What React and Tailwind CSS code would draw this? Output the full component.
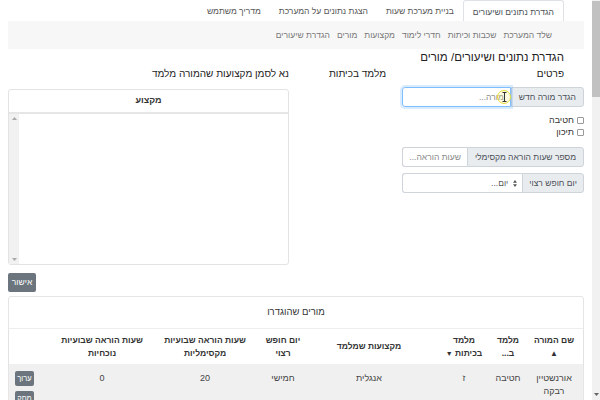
import React from 'react'

const tabs = ['הגדרת נתונים ושיעורים', 'בניית מערכת שעות', 'הצגת נתונים על המערכת', 'מדריך משתמש']
const subLinks = ['שלד המערכת', 'שכבות וכיתות', 'חדרי לימוד', 'מקצועות', 'מורים', 'הגדרת שיעורים']

const Arrows = () => (
  <svg width="4" height="7" viewBox="0 0 4 7" className="shrink-0">
    <path d="M2 0 L4 2.8 L0 2.8 Z" fill="#555" />
    <path d="M2 7 L4 4.2 L0 4.2 Z" fill="#555" />
  </svg>
)

const Check = ({ label }) => (
  <label className="flex items-center gap-[3px] h-[12px] leading-[12px] text-[9px] text-[#333]">
    <span className="w-[7px] h-[7px] border border-[#999] rounded-[1px] bg-white" />
    {label}
  </label>
)

const cols = 'grid grid-cols-[58px_34px_54px_136px_36px_120px_86px_1fr]'

const App = () => {
  return (
    <div className="flex w-[600px] h-[400px] overflow-hidden bg-white" style={{ fontFamily: '"Liberation Sans", "DejaVu Sans", sans-serif' }}>
      {/* תוכן העמוד */}
      <div dir="rtl" className="w-[592px] px-2 text-[#212529]">
        {/* לשוניות */}
        <div className="flex h-[21px] pr-[20px]">
          {tabs.map((t, i) => (
            <div
              key={t}
              className={
                i === 0
                  ? 'px-[9px] h-[21px] leading-[22px] text-[8.5px] text-[#495057] bg-white border border-b-0 border-[#dee2e6] rounded-t-[3px] whitespace-nowrap'
                  : 'px-[9px] h-[21px] leading-[22px] text-[8.5px] text-[#555] whitespace-nowrap'
              }
            >
              {t}
            </div>
          ))}
        </div>

        {/* תפריט משני */}
        <div className="h-[28px] bg-[#f7f7f7] flex items-center gap-[7px] pr-[32px] text-[8.5px] text-[#777]">
          {subLinks.map((l) => (
            <span key={l}>{l}</span>
          ))}
        </div>

        <h1 className="pr-[20px] text-[11.5px] leading-[17px] text-[#222] mt-0">הגדרת נתונים ושיעורים/ מורים</h1>

        <div className="grid grid-cols-[182px_1fr_281px]">
          <div className="pr-[20px] text-[10px] leading-[16px] text-[#222]">פרטים</div>
          <div className="pr-[16px] text-[10px] leading-[16px] text-[#222]">מלמד בכיתות</div>
          <div className="text-[10px] leading-[16px] text-[#222]">נא לסמן מקצועות שהמורה מלמד</div>

          {/* טופס פרטים */}
          <div className="pt-[5px] flex flex-col">
            <div className="flex h-[20px] text-[8.5px]">
              <span className="px-[7px] flex items-center bg-[#e9ecef] border border-[#ced4da] rounded-r-[3px] text-[#495057] whitespace-nowrap">הגדר מורה חדש</span>
              <div className="relative flex-1 flex items-center px-[6px] border border-[#80bdff] rounded-l-[3px] shadow-[0_0_0_2px_rgba(0,123,255,0.15)] text-[#888] whitespace-nowrap">
                מורה...
                <span className="absolute top-[2px] left-[94px] w-[14px] h-[14px] rounded-full border-[1.5px] border-[#e8dc3c] bg-[#f6ef8a]/25" />
                <svg width="5" height="10" viewBox="0 0 5 10" className="absolute top-[4px] left-[98.5px]">
                  <path d="M0.5 0.5 H4.5 M2.5 0.5 V9.5 M0.5 9.5 H4.5" stroke="#333" strokeWidth="1" fill="none" />
                </svg>
              </div>
            </div>
            <div className="mt-[7px] flex flex-col">
              <Check label="חטיבה" />
              <Check label="תיכון" />
            </div>
            <div className="flex h-[20px] text-[8.5px] mt-[9px]">
              <span className="px-[7px] flex items-center bg-[#e9ecef] border border-[#ced4da] rounded-r-[3px] text-[#495057] whitespace-nowrap">מספר שעות הוראה מקסימלי</span>
              <div className="flex-1 flex items-center px-[6px] border border-r-0 border-[#ced4da] rounded-l-[3px] bg-white text-[#888] whitespace-nowrap overflow-hidden">שעות הוראה...</div>
            </div>
            <div className="flex h-[20px] text-[8.5px] mt-[6px]">
              <span className="px-[6px] flex items-center bg-[#e9ecef] border border-[#ced4da] rounded-r-[3px] text-[#495057] whitespace-nowrap">יום חופש רצוי</span>
              <div className="flex-1 flex items-center gap-[5px] px-[5px] border border-r-0 border-[#ced4da] rounded-l-[3px] bg-white text-[#555]">
                <Arrows />
                יום...
              </div>
            </div>
          </div>

          <div />

          {/* טבלת מקצועות */}
          <div className="pt-[7px]">
            <div className="h-[176px] border border-[#e3e3e3] rounded-[3px] flex flex-col bg-white">
              <div className="h-[24px] flex items-center justify-center text-[9px] font-bold text-[#333] border-b-2 border-[#e6e6e6]">מקצוע</div>
              <div className="flex-1 flex">
                <div className="flex-1" />
                <div className="w-[10px] bg-[#f1f1f1] flex flex-col items-center justify-between py-[3px]">
                  <svg width="5" height="3" viewBox="0 0 5 3"><path d="M2.5 0 L5 3 L0 3 Z" fill="#aaa" /></svg>
                  <svg width="5" height="3" viewBox="0 0 5 3"><path d="M2.5 3 L5 0 L0 0 Z" fill="#aaa" /></svg>
                </div>
              </div>
            </div>
          </div>
        </div>

        <div className="flex justify-end mt-[8px]">
          <button className="h-[19px] w-[28px] bg-[#6c757d] text-white text-[8.5px] rounded-[2px]">אישור</button>
        </div>

        {/* מורים שהוגדרו */}
        <div className="mt-[4px] border border-[#e5e5e5] rounded-[3px] bg-white">
          <div className="h-[31px] flex items-center justify-center text-[9.5px] text-[#333]">מורים שהוגדרו</div>
          <div className={`${cols} border-t border-[#eee] h-[36px] items-center text-center text-[8.5px] leading-[13px] font-bold text-[#333] shadow-[0_2px_2px_rgba(0,0,0,0.04)] whitespace-nowrap`}>
            <div>שם המורה<br /><span className="text-[8px]">▲</span></div>
            <div>מלמד<br />ב...</div>
            <div>מלמד<br />בכיתות <span className="text-[7px]">▼</span></div>
            <div>מקצועות שמלמד</div>
            <div>יום חופש<br />רצוי</div>
            <div>שעות הוראה שבועיות<br />מקסימליות</div>
            <div>שעות הוראה שבועיות<br />נוכחיות</div>
            <div />
          </div>
          <div className={`${cols} bg-[#f0f0f0] h-[40px] pt-[8px] text-center text-[9px] leading-[13px] text-[#444] whitespace-nowrap`}>
            <div>אורנשטיין<br />רבקה</div>
            <div>חטיבה</div>
            <div>ז</div>
            <div>אנגלית</div>
            <div>חמישי</div>
            <div>20</div>
            <div>0</div>
            <div className="relative flex flex-col items-end pl-[6px] -mt-[1px] gap-[5px]">
              <button className="h-[15px] w-[19px] bg-[#6c757d] text-white text-[7.5px] rounded-[2px]">ערוך</button>
              <button className="h-[15px] w-[19px] bg-[#6c757d] text-white text-[7.5px] rounded-[2px]">מחק</button>
            </div>
          </div>
        </div>
      </div>

      {/* פס גלילה */}
      <div className="w-[8px] h-[400px] bg-[#f1f1f1] flex flex-col justify-between">
        <div className="h-[96px] mt-[1px] bg-[#c1c1c1]" />
        <div className="flex justify-center pb-[4px]">
          <svg width="5" height="3" viewBox="0 0 5 3"><path d="M2.5 3 L5 0 L0 0 Z" fill="#666" /></svg>
        </div>
      </div>
    </div>
  )
}

export default App
